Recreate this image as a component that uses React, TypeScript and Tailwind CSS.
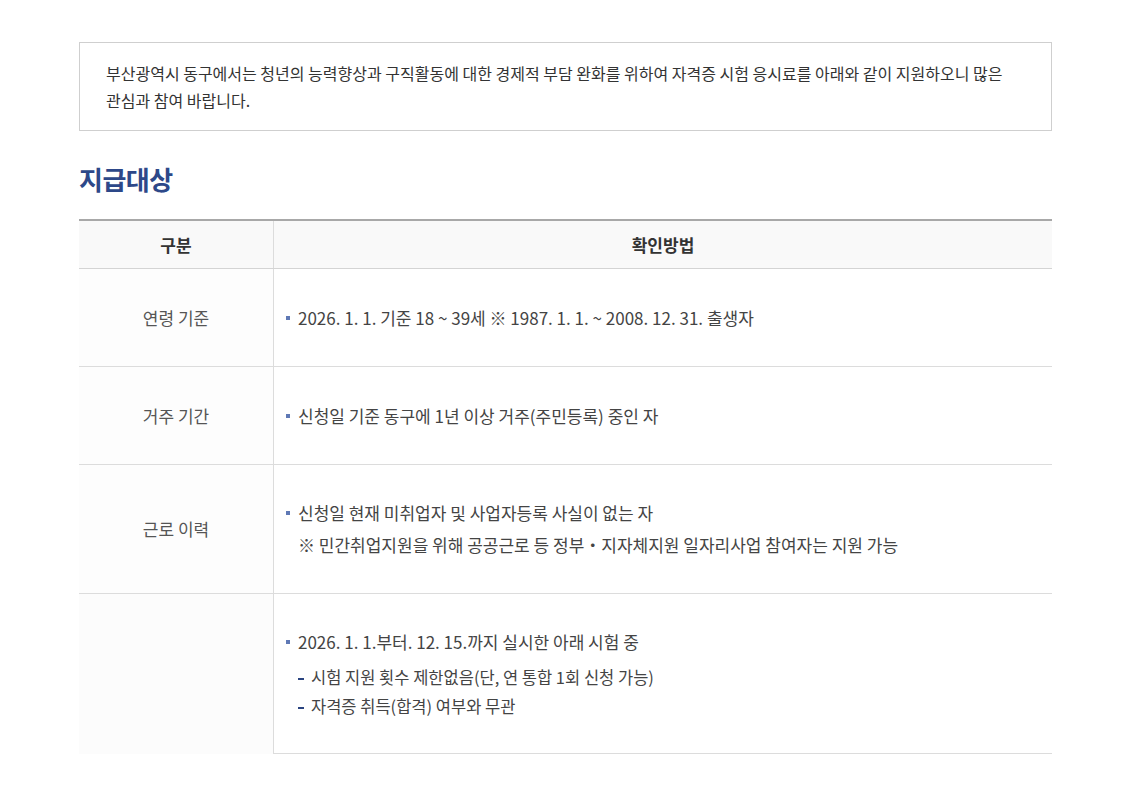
const font = { fontFamily: '"Noto Sans CJK KR", "Noto Sans", sans-serif' };

function Bullet({ children }: { children: React.ReactNode }) {
  return (
    <div className="flex items-start">
      <span className="mt-[14px] mr-[8px] h-[4px] w-[4px] shrink-0 bg-[#5f79b5]" />
      <span>{children}</span>
    </div>
  );
}

function Dash({ children }: { children: React.ReactNode }) {
  return (
    <div className="flex items-start pl-[12px] text-[16.5px] leading-[29px] text-[#444]">
      <span className="mt-[15px] mr-[7px] h-[2px] w-[6px] shrink-0 bg-[#2a4480]" />
      <span>{children}</span>
    </div>
  );
}

export default function App() {
  return (
    <div className="min-h-screen bg-white pt-[42px] text-[#333]" style={font}>
      <div className="ml-[79px] w-[973px]">
        {/* 안내 박스 */}
        <div className="border border-[#cfcfcf] px-[26px] pt-[17px] pb-[16px] text-[16px] leading-[27px] text-[#333] break-keep">
          부산광역시 동구에서는 청년의 능력향상과 구직활동에 대한 경제적 부담 완화를 위하여 자격증 시험 응시료를 아래와 같이 지원하오니 많은 관심과 참여 바랍니다.
        </div>

        <h2 className="mt-[33px] text-[26px] font-bold leading-[30px] tracking-[-0.5px] text-[#2d4889]">지급대상</h2>

        <div className="mt-[25px] border-t-2 border-[#a8a8a8]">
          <div className="grid grid-cols-[195px_1fr] h-[48px] bg-[#f9f9f9] border-b border-[#d4d4d4] text-[17px] font-bold text-[#333]">
            <div className="flex items-center justify-center border-r border-[#dcdcdc]">구분</div>
            <div className="flex items-center justify-center">확인방법</div>
          </div>

          <div className="grid grid-cols-[195px_1fr] h-[98px] border-b border-[#dcdcdc] text-[17px]">
            <div className="flex items-center justify-center border-r border-[#dcdcdc] bg-[#fdfdfd] text-[#555]">연령 기준</div>
            <div className="flex flex-col justify-center pl-[12px] leading-[32px] text-[#444]">
              <Bullet>2026. 1. 1. 기준 18 ~ 39세 ※ 1987. 1. 1. ~ 2008. 12. 31. 출생자</Bullet>
            </div>
          </div>

          <div className="grid grid-cols-[195px_1fr] h-[98px] border-b border-[#dcdcdc] text-[17px]">
            <div className="flex items-center justify-center border-r border-[#dcdcdc] bg-[#fdfdfd] text-[#555]">거주 기간</div>
            <div className="flex flex-col justify-center pl-[12px] leading-[32px] text-[#444]">
              <Bullet>신청일 기준 동구에 1년 이상 거주(주민등록) 중인 자</Bullet>
            </div>
          </div>

          <div className="grid grid-cols-[195px_1fr] h-[129px] border-b border-[#dcdcdc] text-[17px]">
            <div className="flex items-center justify-center border-r border-[#dcdcdc] bg-[#fdfdfd] text-[#555]">근로 이력</div>
            <div className="flex flex-col justify-center pl-[12px] leading-[32px] text-[#444]">
              <Bullet>신청일 현재 미취업자 및 사업자등록 사실이 없는 자</Bullet>
              <div className="pl-[12px]">※ 민간취업지원을 위해 공공근로 등 정부・지자체지원 일자리사업 참여자는 지원 가능</div>
            </div>
          </div>

          <div className="grid grid-cols-[195px_1fr] h-[160px] text-[17px]">
            <div className="border-r border-[#dcdcdc] bg-[#fcfcfc]" />
            <div className="flex flex-col justify-center border-b border-[#dcdcdc] pl-[12px] text-[#444]">
              <div className="leading-[32px]">
                <Bullet>2026. 1. 1.부터. 12. 15.까지 실시한 아래 시험 중</Bullet>
              </div>
              <div className="mt-[5px]">
                <Dash>시험 지원 횟수 제한없음(단, 연 통합 1회 신청 가능)</Dash>
                <Dash>자격증 취득(합격) 여부와 무관</Dash>
              </div>
            </div>
          </div>
        </div>
      </div>
    </div>
  );
}
